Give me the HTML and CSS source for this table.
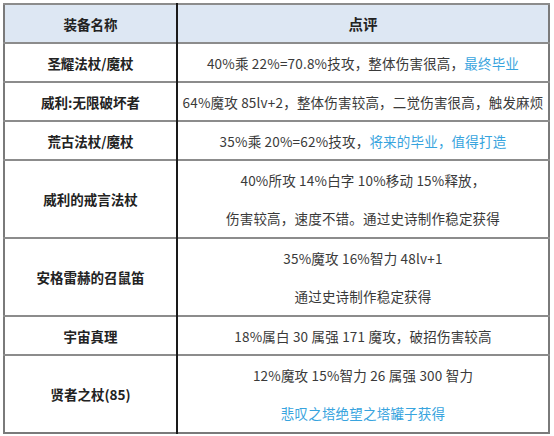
FILE: index.html
```html
<!DOCTYPE html>
<html lang="zh-CN">
<head>
<meta charset="utf-8">
<link rel="stylesheet" href="styles.css">
</head>
<body>
<table class="gear">
  <thead>
    <tr class="r1">
      <th class="name">装备名称</th>
      <th class="note">点评</th>
    </tr>
  </thead>
  <tbody>
    <tr class="r1">
      <td class="name">圣耀法杖/魔杖</td>
      <td class="note">40%乘 22%=70.8%技攻，整体伤害很高，<span class="hl">最终毕业</span></td>
    </tr>
    <tr class="r1">
      <td class="name">威利:无限破坏者</td>
      <td class="note">64%魔攻 85lv+2，整体伤害较高，二觉伤害很高，触发麻烦</td>
    </tr>
    <tr class="r1">
      <td class="name">荒古法杖/魔杖</td>
      <td class="note">35%乘 20%=62%技攻，<span class="hl">将来的毕业，值得打造</span></td>
    </tr>
    <tr class="r2">
      <td class="name">威利的戒言法杖</td>
      <td class="note"><p>40%所攻 14%白字 10%移动 15%释放，</p><p>伤害较高，速度不错。通过史诗制作稳定获得</p></td>
    </tr>
    <tr class="r2">
      <td class="name">安格雷赫的召鼠笛</td>
      <td class="note"><p>35%魔攻 16%智力 48lv+1</p><p>通过史诗制作稳定获得</p></td>
    </tr>
    <tr class="r1">
      <td class="name">宇宙真理</td>
      <td class="note">18%属白 30 属强 171 魔攻，破招伤害较高</td>
    </tr>
    <tr class="r2">
      <td class="name">贤者之杖(85)</td>
      <td class="note"><p>12%魔攻 15%智力 26 属强 300 智力</p><p class="hl">悲叹之塔绝望之塔罐子获得</p></td>
    </tr>
  </tbody>
</table>
</body>
</html>
```
FILE: styles.css
```css
html, body {
  margin: 0;
  padding: 0;
  background: #ffffff;
}
body {
  padding: 3px 0 0 3px;
  font-family: "Noto Sans CJK SC", "Noto Sans", sans-serif;
  color: #333333;
}
.gear {
  width: 547px;
  border-collapse: collapse;
  border: 2px solid #7a7a7a;
  table-layout: fixed;
}
.gear th, .gear td {
  border-top: 2px solid #8c8c8c;
  padding: 0;
  text-align: center;
  vertical-align: middle;
}
.gear .name {
  width: 171px;
  border-right: 2px solid #1a1a1a;
  font-weight: bold;
  font-size: 13.5px;
  color: #222222;
}
.gear th {
  background: #dde7f3;
  font-size: 14.5px;
  font-weight: bold;
  color: #222222;
}
.gear .note {
  font-size: 13.5px;
  letter-spacing: 0.2px;
  color: #3a3a3a;
}
.gear th.note {
  font-size: 14.5px;
  letter-spacing: 0;
  color: #222222;
}
.r1 { height: 39px; }
.r2 { height: 78px; }
.note p {
  margin: 0;
  line-height: 38px;
}
.hl {
  color: #38a4de;
}
```
